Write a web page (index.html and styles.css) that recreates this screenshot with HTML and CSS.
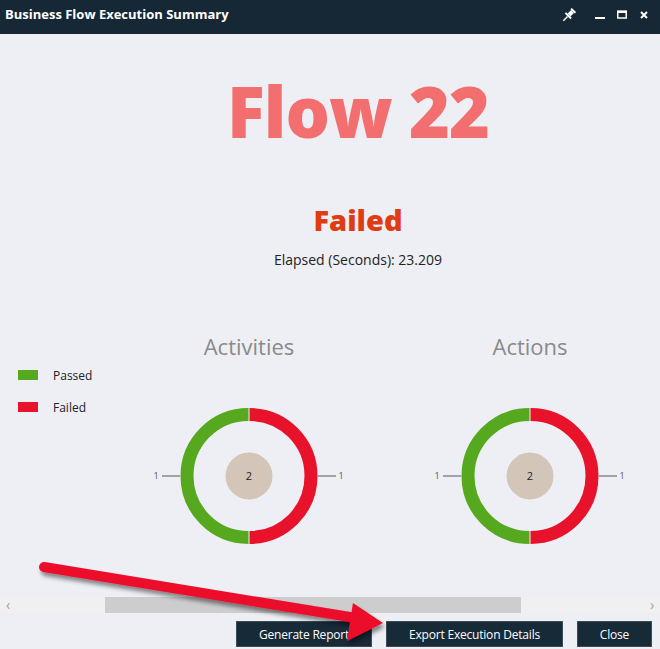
FILE: index.html
```html
<!DOCTYPE html>
<html>
<head>
<meta charset="utf-8">
<link rel="stylesheet" href="styles.css">
</head>
<body>
<div class="window">
  <header class="titlebar">
    <div class="title">Business Flow Execution Summary</div>
    <div class="controls">
      <svg class="ctl pin" width="14" height="16" viewBox="0 0 14 16">
        <g transform="rotate(45 7 8)">
          <rect x="4" y="1" width="6" height="2" fill="#fff"/>
          <rect x="5" y="3" width="4" height="5" fill="#fff"/>
          <rect x="3" y="8" width="8" height="2" fill="#fff"/>
          <rect x="6.3" y="10" width="1.4" height="6" fill="#fff"/>
        </g>
      </svg>
      <svg class="ctl" width="12" height="12" viewBox="0 0 12 12"><rect x="1" y="8" width="10" height="2" fill="#fff"/></svg>
      <svg class="ctl" width="12" height="12" viewBox="0 0 12 12"><rect x="1.75" y="2.5" width="8.5" height="6.5" fill="none" stroke="#fff" stroke-width="1.5"/><rect x="1" y="1.5" width="10" height="2.5" fill="#fff"/></svg>
      <svg class="ctl" width="12" height="12" viewBox="0 0 12 12"><path d="M3 3 L9 9 M9 3 L3 9" stroke="#fff" stroke-width="2"/></svg>
    </div>
  </header>

  <main class="content">
    <div class="summary">
      <div class="flow-name">Flow 22</div>
      <div class="status">Failed</div>
      <div class="elapsed">Elapsed (Seconds): 23.209</div>
    </div>

    <div class="charts">
      <ul class="legend">
        <li class="legend-item"><span class="swatch passed"></span>Passed</li>
        <li class="legend-item"><span class="swatch failed"></span>Failed</li>
      </ul>

      <section class="chart">
        <h2 class="chart-title">Activities</h2>
        <svg class="donut" width="260" height="150" viewBox="0 0 260 150">
          <path d="M129.5 13.5 A61.5 61.5 0 0 0 129.5 136.5" fill="none" stroke="#56a91e" stroke-width="13"/>
          <path d="M130.5 13.5 A61.5 61.5 0 0 1 130.5 136.5" fill="none" stroke="#e8122a" stroke-width="13"/>
          <circle cx="130" cy="75" r="23.5" fill="#d3c5b8"/>
          <text x="130" y="79" class="center-num">2</text>
          <line x1="43" y1="75" x2="61" y2="75" class="lead"/>
          <line x1="199" y1="75" x2="217" y2="75" class="lead"/>
          <text x="37" y="78" class="lead-num">1</text>
          <text x="222" y="78" class="lead-num">1</text>
        </svg>
      </section>

      <section class="chart">
        <h2 class="chart-title">Actions</h2>
        <svg class="donut" width="260" height="150" viewBox="0 0 260 150">
          <path d="M129.5 13.5 A61.5 61.5 0 0 0 129.5 136.5" fill="none" stroke="#56a91e" stroke-width="13"/>
          <path d="M130.5 13.5 A61.5 61.5 0 0 1 130.5 136.5" fill="none" stroke="#e8122a" stroke-width="13"/>
          <circle cx="130" cy="75" r="23.5" fill="#d3c5b8"/>
          <text x="130" y="79" class="center-num">2</text>
          <line x1="43" y1="75" x2="61" y2="75" class="lead"/>
          <line x1="199" y1="75" x2="217" y2="75" class="lead"/>
          <text x="37" y="78" class="lead-num">1</text>
          <text x="222" y="78" class="lead-num">1</text>
        </svg>
      </section>
    </div>
  </main>

  <div class="hscroll">
    <span class="chev">&#8249;</span>
    <div class="track"><div class="thumb"></div></div>
    <span class="chev">&#8250;</span>
  </div>

  <footer class="buttons">
    <button class="btn btn-report">Generate Report</button>
    <button class="btn btn-export">Export Execution Details</button>
    <button class="btn btn-close">Close</button>
  </footer>

  <svg class="arrow" width="660" height="649" viewBox="0 0 660 649">
    <defs>
      <filter id="sh" x="-10%" y="-50%" width="120%" height="200%">
        <feDropShadow dx="2" dy="4" stdDeviation="2" flood-color="#000" flood-opacity="0.45"/>
      </filter>
    </defs>
    <g filter="url(#sh)">
      <line x1="44" y1="567" x2="356" y2="618" stroke="#ec0b2b" stroke-width="10" stroke-linecap="round"/>
      <polygon points="383,623 353,603 347,641" fill="#ec0b2b"/>
    </g>
  </svg>
</div>
</body>
</html>
```

FILE: styles.css
```css
* { box-sizing: border-box; }
html, body { margin: 0; padding: 0; }
body {
  width: 660px;
  height: 649px;
  overflow: hidden;
  background: #eeeff4;
  font-family: "Open Sans", "Noto Sans", sans-serif;
}
.window {
  position: relative;
  width: 660px;
  height: 649px;
  display: flex;
  flex-direction: column;
}
.titlebar {
  height: 34px;
  background: #162836;
  display: flex;
  align-items: center;
  justify-content: space-between;
  padding: 0 10px 0 5px;
}
.title {
  color: #fff;
  font-weight: 700;
  font-size: 13px;
  margin-top: -6px;
  letter-spacing: 0;
}
.controls {
  display: flex;
  align-items: center;
  gap: 10px;
  margin-top: -4px;
}
.ctl { display: block; }
.pin { margin-right: 8px; }

.content {
  flex: 1;
  display: flex;
  flex-direction: column;
}
.summary {
  padding-left: 56px;
  padding-top: 42px;
  display: flex;
  flex-direction: column;
  align-items: center;
}
.flow-name {
  font-size: 70px;
  line-height: 70px;
  height: 70px;
  font-weight: 800;
  color: #f36f6f;
  letter-spacing: -1px;
}
.status {
  margin-top: 59px;
  font-size: 29px;
  line-height: 29px;
  height: 29px;
  font-weight: 800;
  color: #e03c12;
}
.elapsed {
  margin-top: 16px;
  font-size: 14px;
  line-height: 20px;
  color: #222;
}

.charts {
  margin-top: 65px;
  display: flex;
  padding-left: 18px;
  gap: 0;
}
.legend {
  list-style: none;
  margin: 0;
  padding: 29px 0 0 0;
  width: 101px;
  display: flex;
  flex-direction: column;
  gap: 10px;
}
.legend-item {
  display: flex;
  align-items: center;
  height: 22px;
  font-size: 12px;
  color: #222;
}
.swatch {
  width: 20px;
  height: 10px;
  margin-right: 15px;
}
.swatch.passed { background: #56a91e; }
.swatch.failed { background: #e8122a; }

.chart {
  width: 260px;
  display: flex;
  flex-direction: column;
  align-items: center;
}
.chart + .chart { margin-left: 21px; }
.chart-title {
  margin: 0;
  font-size: 22px;
  line-height: 22px;
  font-weight: 400;
  color: #8a8a8a;
}
.donut {
  display: block;
  margin-top: 44px;
}
.center-num {
  font-size: 11px;
  fill: #222;
  text-anchor: middle;
  font-family: "Open Sans", sans-serif;
}
.lead { stroke: #555; stroke-width: 1; }
.lead-num {
  font-size: 9px;
  fill: #555;
  text-anchor: middle;
  font-family: "Open Sans", sans-serif;
}

.hscroll {
  height: 16px;
  background: #f0f0f0;
  display: flex;
  align-items: center;
}
.chev {
  width: 16px;
  text-align: center;
  color: #a0a0a0;
  font-size: 14px;
  line-height: 16px;
}
.track {
  flex: 1;
  height: 16px;
  padding-left: 89px;
  padding-right: 123px;
}
.thumb {
  height: 16px;
  background: #cdcdcd;
}

.buttons {
  height: 36px;
  display: flex;
  justify-content: flex-end;
  align-items: flex-start;
  gap: 14px;
  padding: 8px 8px 0 0;
}
.btn {
  height: 26px;
  background: #172a38;
  border: 1px solid #3d4d58;
  color: #fff;
  font-family: "Open Sans", sans-serif;
  font-size: 12px;
  padding: 0;
  letter-spacing: -0.2px;
}
.btn-report { width: 136px; }
.btn-export { width: 177px; }
.btn-close { width: 75px; }

.arrow {
  position: absolute;
  left: 0;
  top: 0;
  pointer-events: none;
}
```
